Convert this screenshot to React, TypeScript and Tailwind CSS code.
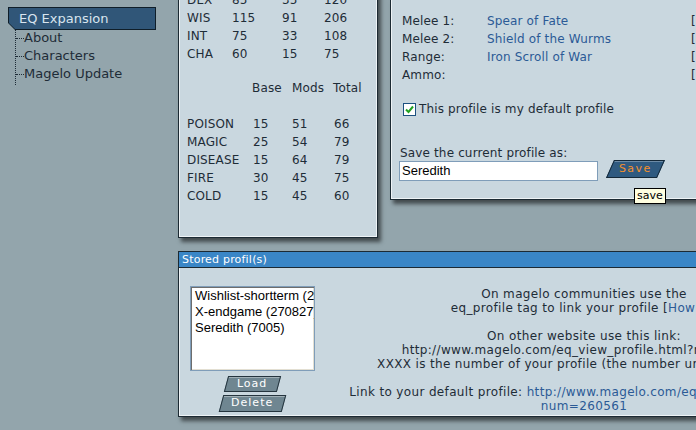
import React from "react";

const stats = [
  ["STR", "90", "40", "130"],
  ["STA", "95", "48", "143"],
  ["AGI", "80", "30", "110"],
  ["DEX", "85", "35", "120"],
  ["WIS", "115", "91", "206"],
  ["INT", "75", "33", "108"],
  ["CHA", "60", "15", "75"],
];

const resists = [
  ["POISON", "15", "51", "66"],
  ["MAGIC", "25", "54", "79"],
  ["DISEASE", "15", "64", "79"],
  ["FIRE", "30", "45", "75"],
  ["COLD", "15", "45", "60"],
];

const gear = [
  ["Melee 1:", "Spear of Fate"],
  ["Melee 2:", "Shield of the Wurms"],
  ["Range:", "Iron Scroll of War"],
  ["Ammo:", ""],
];

const profiles = ["Wishlist-shortterm (270826)", "X-endgame (270827)", "Seredith (7005)"];

// panel frame shared by the three boxes
const panel =
  "bg-[#c9d7df] border border-[#1c2a33] shadow-[inset_1px_-1px_0_#eef3f6,inset_-1px_0_0_#eef3f6,3px_4px_4px_rgba(0,0,0,0.55)]";

const SlantButton = ({ label, w, h }: { label: string; w: string; h: string }) => (
  <div className={`${w} ${h} -skew-x-[15deg] border border-[#24343e] bg-[#6f8691] shadow-[inset_0_1px_0_rgba(255,255,255,0.35)] flex items-center justify-center`}>
    <span className="skew-x-[15deg] text-[11px] tracking-[1px] text-white">{label}</span>
  </div>
);

const App = () => {
  return (
    <div className="relative w-[696px] h-[430px] overflow-hidden bg-[#93a5ac] flex font-['DejaVu_Sans',Verdana,sans-serif] text-[12px] tracking-[0.15px] text-[#1e2c37]">
      {/* Sidebar */}
      <div className="w-[178px] shrink-0 pt-[7px] pl-[8px]">
        <div className="w-[148px] h-[23px] p-px bg-[#0f1e29] [clip-path:polygon(0_0,100%_0,100%_100%,7px_100%,0_calc(100%_-_7px))]">
          <div className="h-full bg-[#305678] [clip-path:polygon(0_0,100%_0,100%_100%,6px_100%,0_calc(100%_-_6px))] pl-[10px] flex items-center text-[13px] tracking-normal text-[#d9e5ef]">
            EQ Expansion
          </div>
        </div>
        <div className="ml-[7px] -mt-px border-l border-dotted border-[#1e2c37] w-fit pb-[2px]">
          {["About", "Characters", "Magelo Update"].map((item) => (
            <div key={item} className="h-[18px] flex items-center">
              <span className="w-[8px] border-t border-dotted border-[#1e2c37]" />
              <span className="text-[13px] tracking-normal leading-[18px]">{item}</span>
            </div>
          ))}
        </div>
      </div>

      {/* Main */}
      <div className="flex flex-col">
        <div className="flex items-start gap-[12px]">
          {/* Stats */}
          <div className={`${panel} w-[200px] -mt-[64px] pl-[8px] pb-[32px]`}>
            {stats.map(([n, b, m, t]) => (
              <div key={n} className="flex h-[18px] leading-[18px]">
                <span className="w-[45px]">{n}</span>
                <span className="w-[50px]">{b}</span>
                <span className="w-[42px]">{m}</span>
                <span>{t}</span>
              </div>
            ))}
            <div className="flex h-[18px] leading-[18px] mt-[16px]">
              <span className="w-[65px]" />
              <span className="w-[40px]">Base</span>
              <span className="w-[41px]">Mods</span>
              <span>Total</span>
            </div>
            <div className="mt-[18px]">
              {resists.map(([n, b, m, t]) => (
                <div key={n} className="flex h-[18px] leading-[18px]">
                  <span className="w-[66px]">{n}</span>
                  <span className="w-[39px]">{b}</span>
                  <span className="w-[42px]">{m}</span>
                  <span>{t}</span>
                </div>
              ))}
            </div>
          </div>

          {/* Equipment / save */}
          <div className={`${panel} w-[340px] -mt-[2px] pt-[13px] pb-[18px]`}>
            <div className="pl-[11px]">
              {gear.map(([label, item]) => (
                <div key={label} className="flex h-[18px] leading-[18px]">
                  <span className="w-[85px]">{label}</span>
                  <span className="w-[204px] text-[#2b5a96]">{item}</span>
                  <span>[</span>
                </div>
              ))}
            </div>
            <label className="flex items-center h-[14px] mt-[18px] pl-[12px] gap-[3px]">
              <span className="w-[13px] h-[13px] bg-white border border-[#1c5180] flex items-center justify-center">
                <svg width="9" height="9" viewBox="0 0 9 9">
                  <path d="M1 4.5 L3.5 7 L8 1.5" fill="none" stroke="#21a121" strokeWidth="2" />
                </svg>
              </span>
              <span className="leading-[14px]">This profile is my default profile</span>
            </label>
            <div className="pl-[8px] mt-[30px]">
              <div className="leading-[14px] pl-px">Save the current profile as:</div>
              <div className="flex items-start mt-px">
                <div className="w-[199px] h-[20px] bg-white border border-[#7f9db9] pl-[2px] leading-[18px] text-[13px] tracking-normal text-black font-['Liberation_Sans',Arial,sans-serif]">
                  Seredith
                </div>
                <div className="ml-[12px] -mt-px">
                  <div className="w-[51px] h-[18px] -skew-x-[24deg] border border-[#142838] bg-[#2f5a80] shadow-[inset_0_1px_0_rgba(255,255,255,0.3)] flex items-center justify-center">
                    <span className="skew-x-[24deg] text-[11px] tracking-[1.5px] text-[#f5902c]">Save</span>
                  </div>
                </div>
              </div>
            </div>
          </div>
        </div>

        {/* Stored profiles */}
        <div className={`${panel} w-[672px] mt-[13px] pb-[3px]`}>
          <div className="h-[16px] bg-[#3a86c6] border-b border-[#1c2a33] pl-[3px] text-white text-[11px] tracking-[0.2px] leading-[15px]">
            Stored profil(s)
          </div>
          <div className="flex pl-[11px] pt-[18px]">
            <div className="flex flex-col items-center w-[125px]">
              <div className="w-[125px] h-[85px] bg-white border border-[#7f9db9] shadow-[inset_1px_1px_0_#6d6d6d,inset_-1px_-1px_0_#e3dfd2] overflow-hidden whitespace-nowrap pl-[4px] pt-px font-['Liberation_Sans',Arial,sans-serif] text-[13px] tracking-normal leading-[16px] text-black">
                {profiles.map((p) => (
                  <div key={p}>{p}</div>
                ))}
              </div>
              <div className="mt-[5px] flex flex-col items-center gap-[3px]">
                <SlantButton label="Load" w="w-[53px]" h="h-[16px]" />
                <SlantButton label="Delete" w="w-[63px]" h="h-[17px]" />
              </div>
            </div>
            <div className="ml-[15px] pt-px w-[508px] text-center whitespace-nowrap leading-[14px] tracking-[0.35px]">
              On magelo communities use the
              <br />
              eq_profile tag to link your profile [<span className="text-[#2b5a96]">How to</span>]
              <br />
              <br />
              On other website use this link:
              <br />
              http://www.magelo.com/eq_view_profile.html?num=XXXX
              <br />
              XXXX is the number of your profile (the number under the name)
              <br />
              <br />
              Link to your default profile:{" "}
              <span className="text-[#2b5a96]">http://www.magelo.com/eq_view_profile.html?</span>
              <br />
              <span className="text-[#2b5a96]">num=260561</span>
            </div>
          </div>
        </div>
      </div>

      {/* tooltip */}
      <div className="absolute left-[634px] top-[188px] h-[16px] px-[2px] bg-[#ffffe1] border border-black text-black text-[11px] tracking-normal leading-[14px]">
        save
      </div>
    </div>
  );
};

export default App;
